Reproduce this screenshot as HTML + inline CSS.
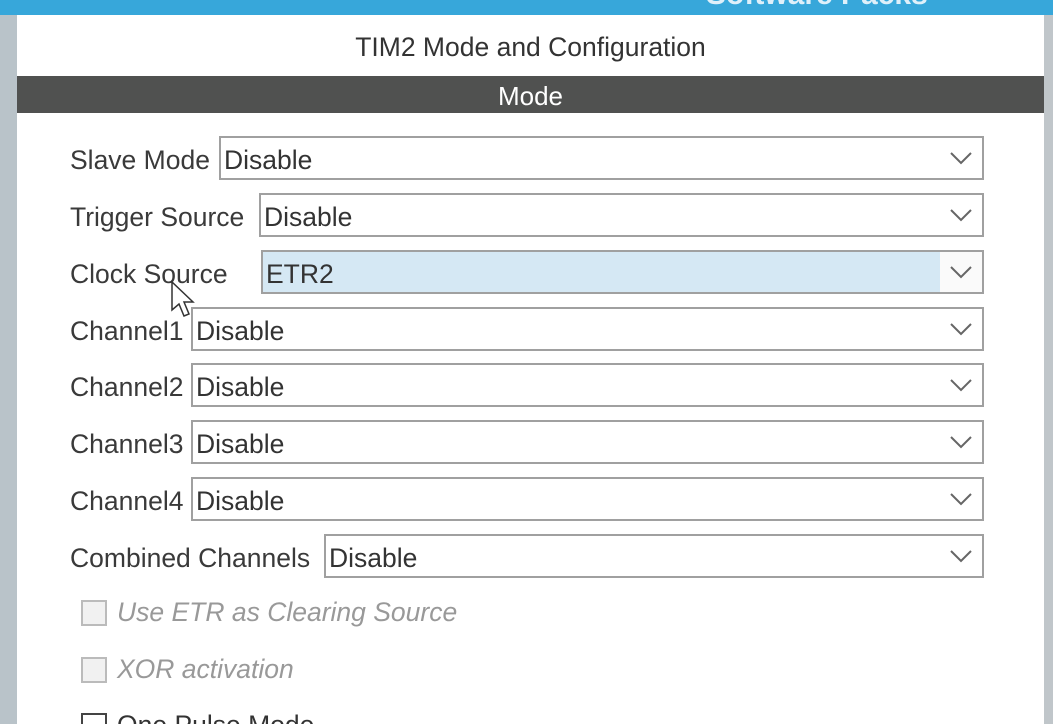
<!DOCTYPE html>
<html><head><style>
html,body{margin:0;width:1053px;height:724px;overflow:hidden}
body{background:#fff;font-family:"Liberation Sans",sans-serif;position:relative}
.abs{position:absolute}
.lbl{position:absolute;left:70px;font-size:26.5px;color:#3a3a3a;line-height:46px}
.sel{position:absolute;right:69px;height:40px;border:2px solid #a0a0a0;background:#fff;font-size:26.5px;color:#333;line-height:44px;padding-left:3px;box-sizing:content-box}
.sel svg{position:absolute;right:10px;top:13px}
.cb{position:absolute;left:81px;width:22px;height:22px;border:2px solid #bbb;background:#f1f1f1}
.ct{position:absolute;left:117px;font-size:26.5px;font-style:italic;color:#999}
</style></head><body>
<div class="abs" style="left:0;top:0;width:1053px;height:15px;background:#37a7da;overflow:hidden">
<div class="abs" style="left:706px;top:-22px;font-size:30px;font-weight:bold;color:#dff0fa">Software Packs</div></div>
<div class="abs" style="left:0;top:15px;width:17px;height:709px;background:#b9c3c9"></div>
<div class="abs" style="left:1044px;top:15px;width:9px;height:709px;background:#c0c6ca"></div>
<div class="abs" style="left:17px;top:32px;width:1027px;text-align:center;font-size:26.5px;color:#333">TIM2 Mode and Configuration</div>
<div class="abs" style="left:17px;top:76px;width:1027px;height:37px;background:#505150;color:#fff;text-align:center;font-size:26px;line-height:41px">Mode</div>

<div class="lbl" style="top:137px">Slave Mode</div>
<div class="sel" style="top:136px;left:219px">Disable<svg width="22" height="14"><path d="M1 2L11 12L21 2" stroke="#666" stroke-width="2" fill="none"/></svg></div>
<div class="lbl" style="top:194px">Trigger Source</div>
<div class="sel" style="top:193px;left:259px">Disable<svg width="22" height="14"><path d="M1 2L11 12L21 2" stroke="#666" stroke-width="2" fill="none"/></svg></div>
<div class="lbl" style="top:251px">Clock Source</div>
<div class="sel" style="top:250px;left:261px;background:linear-gradient(to right,#d5e8f4 0,#d5e8f4 677px,#fafafa 677px)">ETR2<svg width="22" height="14"><path d="M1 2L11 12L21 2" stroke="#666" stroke-width="2" fill="none"/></svg></div>
<div class="lbl" style="top:308px">Channel1</div>
<div class="sel" style="top:307px;left:191px">Disable<svg width="22" height="14"><path d="M1 2L11 12L21 2" stroke="#666" stroke-width="2" fill="none"/></svg></div>
<div class="lbl" style="top:364px">Channel2</div>
<div class="sel" style="top:363px;left:191px">Disable<svg width="22" height="14"><path d="M1 2L11 12L21 2" stroke="#666" stroke-width="2" fill="none"/></svg></div>
<div class="lbl" style="top:421px">Channel3</div>
<div class="sel" style="top:420px;left:191px">Disable<svg width="22" height="14"><path d="M1 2L11 12L21 2" stroke="#666" stroke-width="2" fill="none"/></svg></div>
<div class="lbl" style="top:478px">Channel4</div>
<div class="sel" style="top:477px;left:191px">Disable<svg width="22" height="14"><path d="M1 2L11 12L21 2" stroke="#666" stroke-width="2" fill="none"/></svg></div>
<div class="lbl" style="top:535px">Combined Channels</div>
<div class="sel" style="top:534px;left:324px">Disable<svg width="22" height="14"><path d="M1 2L11 12L21 2" stroke="#666" stroke-width="2" fill="none"/></svg></div>

<div class="cb" style="top:600px"></div><div class="ct" style="top:597px">Use ETR as Clearing Source</div>
<div class="cb" style="top:657px"></div><div class="ct" style="top:654px">XOR activation</div>
<div class="cb" style="top:713px;border-color:#444;background:#fff"></div><div class="ct" style="top:710px;font-style:normal;color:#333">One Pulse Mode</div>

<svg class="abs" style="left:170px;top:280px" width="28" height="40"><path d="M2 2L2 30L9 24L14 36L19 34L14 22L23 22Z" fill="#fff" stroke="#333" stroke-width="1.5"/></svg>
</body></html>
